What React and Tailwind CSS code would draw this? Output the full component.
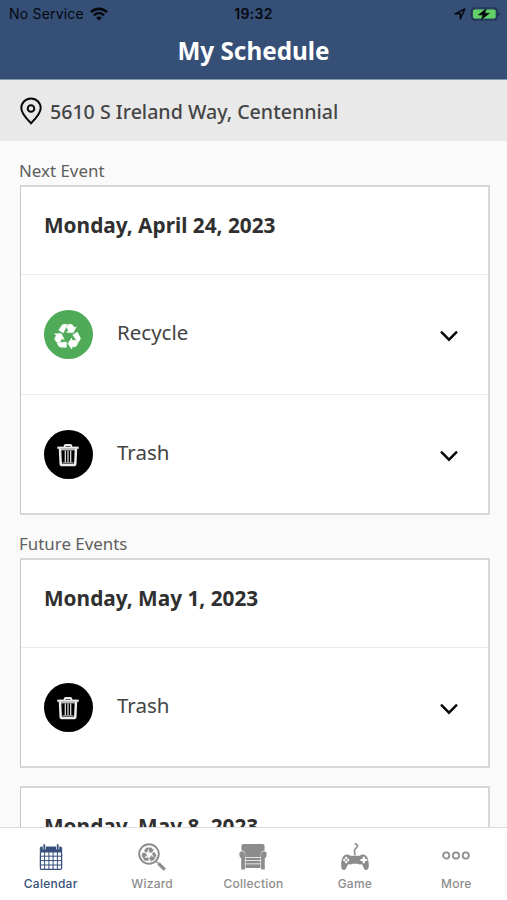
function Wifi() {
  return (
    <svg className="ml-[6px] h-[14px] w-[18px]" viewBox="0 0 18 14" fill="none" stroke="#05080d">
      <path d="M1 5.2C5.5.7 12.5.7 17 5.2" strokeWidth="2.6" />
      <path d="M3.9 8.3c3-2.8 7.2-2.8 10.2 0" strokeWidth="2.4" />
      <path d="M9 13.5L6.2 10.7c1.5-1.5 4.1-1.5 5.6 0z" fill="#05080d" stroke="none" />
    </svg>
  );
}

function Battery() {
  return (
    <svg className="h-[14px] w-[30px]" viewBox="0 0 30 14" fill="none">
      <rect x="0.6" y="1" width="25.4" height="12" rx="3.4" stroke="#1d3049" strokeWidth="1.2" />
      <rect x="2" y="2.5" width="22.6" height="9" rx="1.8" fill="#62d166" />
      <path d="M27.2 5v4c1.3-.5 1.6-1.2 1.6-2s-.3-1.5-1.6-2z" fill="#1d3049" />
      <path d="M15.2 1.8L7.4 7.9h4.5l-1.5 4.7 8-6.3h-4.6z" fill="#05080d" stroke="#05080d" strokeWidth=".6" />
    </svg>
  );
}

// One third of the recycling loop is drawn around the origin and turned three times.
function RecycleLoop() {
  return [0, 120, 240].map((angle) => (
    <g key={angle} transform={`rotate(${angle})`} fill="currentColor" stroke="currentColor" strokeWidth=".7" strokeLinejoin="round">
      <path d="M-8.6-6.4L-5.4-11.4Q-4.9-12.2-4-12.2H-.4L-1-10.4-4.2-3.8z" />
      <path d="M.8-12.2H3.6q1 0 1.5.8L6.7-8.8 8.7-9.8 5.7-4-.9-4.4 1.2-5.6-.8-9.4z" />
    </g>
  ));
}

function RecycleIcon() {
  return (
    <svg className="h-[28px] w-[28px] text-white" viewBox="-14 -14 28 28">
      <g transform="translate(-.5 1.6)"><RecycleLoop /></g>
    </svg>
  );
}

function Trash() {
  return (
    <svg className="h-[24px] w-[22px]" viewBox="0 0 22 24" fill="none" stroke="#ececec">
      <path d="M0.3 4.7h21.4" strokeWidth="2.2" />
      <path d="M7.6 4.5V3.3Q7.6 2 9 2h4q1.4 0 1.4 1.3v1.2" strokeWidth="1.9" />
      <path d="M3 5.5l.7 15.1q.1 1.5 1.6 1.5h11.4q1.5 0 1.6-1.5L19 5.5" strokeWidth="2.5" />
      <path d="M4 6.6h14" stroke="#bcbcbc" strokeWidth="1.6" />
      <path d="M8.3 7.5v12M11 7.5v12M13.7 7.5v12" strokeWidth="1.2" />
      <path d="M5.5 19.8h11" stroke="#a8a8a8" strokeWidth="1.2" />
    </svg>
  );
}

function Row({ kind, last }) {
  const recycle = kind === "Recycle";
  return (
    <div className={`flex items-center border-t border-[#ebebeb] pl-[22.5px] pr-[30px] ${last ? "h-[119px] pt-[1px]" : "h-[120px]"}`}>
      <div className={`flex h-[49px] w-[49px] shrink-0 items-center justify-center rounded-full ${recycle ? "bg-[#4fab58]" : "bg-black"}`}>
        {recycle ? <RecycleIcon /> : <Trash />}
      </div>
      <span className="ml-[24.5px] grow pb-[6px] text-[20.5px] leading-[28px] text-[#444]">{kind}</span>
      <svg className="mt-[3px] h-[12px] w-[18px]" viewBox="0 0 18 12" fill="none" stroke="#050505" strokeWidth="2.4">
        <path d="M1 1.7l8 8 8-8" />
      </svg>
    </div>
  );
}

function Card({ date, items }) {
  return (
    <section className="mr-[17px] ml-[20px] shrink-0 border-2 border-l border-[#d8d8d8] border-l-[#c6c6c6] bg-white">
      <h2 className="flex h-[87px] items-center pb-[12px] pl-[23px] text-[20.8px] leading-[30px] font-bold text-[#303030]">{date}</h2>
      {items.map((kind, i) => <Row key={kind} kind={kind} last={i === items.length - 1} />)}
    </section>
  );
}

function CalendarIcon() {
  return (
    <svg className="h-[28px] w-[26px]" viewBox="0 0 26 28" fill="none" stroke="currentColor">
      <path d="M2.3 5.2Q2.3 4 3.5 4h19q1.2 0 1.2 1.2v3.6H2.3z" fill="currentColor" strokeWidth="1" />
      <path d="M6.3 1.3v5M19.7 1.3v5" stroke="white" strokeWidth="3.2" />
      <path d="M6.3 1.3v5M19.7 1.3v5" strokeWidth="1.8" />
      <rect x="2.4" y="8.6" width="21.2" height="17.8" rx="1.5" strokeWidth="1.3" />
      <path d="M6.6 9v17M10.9 9v17M15.1 9v17M19.4 9v17M2.5 13.2h21M2.5 17.6h21M2.5 22h21" strokeWidth="1" />
    </svg>
  );
}

function WizardIcon() {
  return (
    <svg className="h-[28px] w-[28px]" viewBox="0 0 28 28" fill="none" stroke="currentColor">
      <circle cx="11" cy="11" r="9.8" strokeWidth="1.9" />
      <g transform="translate(11 11.6) scale(.56)"><RecycleLoop /></g>
      <path d="M18.2 18.2l2.4 2.4" strokeWidth="1.3" />
      <path d="M20.5 20.5l6.3 6.1" strokeWidth="3.2" />
    </svg>
  );
}

function ChairIcon() {
  return (
    <svg className="h-[28px] w-[28px]" viewBox="0 0 28 28" fill="currentColor">
      <path d="M2.4 7.3V3Q2.4 1 4.4 1h19.2q2 0 2 2v4.3q-3.8.5-3.8 4.6v2.4H6.2v-2.4q0-4.1-3.8-4.6z" />
      <path d="M6.5 15h15v2.3h-15zM6.5 18h15v2.5h-15zM6.5 21.3h15v3.8h-15z" />
      <path d="M.3 11.5C.3 9.3 1.3 8.2 3 8.2s2.9 1.3 2.9 3.3v15H2.2V15.3Q.3 14 .3 11.5zM27.7 11.5c0-2.2-1-3.3-2.7-3.3s-2.9 1.3-2.9 3.3v15h3.7V15.3q1.9-1.3 1.9-3.8z" />
    </svg>
  );
}

function GameIcon() {
  return (
    <svg className="h-[28px] w-[28px]" viewBox="0 0 28 28" fill="none">
      <path d="M13.7.5c2.8 1 3.7 2.6 1.6 4.3-2.4 1.7-2.2 3.2-1.1 7.5" stroke="currentColor" strokeWidth="1.6" />
      <path d="M5.2 11.5q2.2-.4 4 1.2h9.6q1.8-1.6 4-1.2c3.8.7 5.1 6.5 5 11.3-.1 5-3.6 5.2-4.8 2.7L20.8 21q-2.6 1.2-4-.2h-5.6q-1.4 1.4-4 .2L5 25.5C3.8 28 .3 27.8.2 22.8c-.1-4.8 1.2-10.6 5-11.3z" fill="currentColor" />
      <path d="M5.2 13.4l1.6 1.7-1.6 1.3-1.6-1.3zM5.2 17.6l1.6 1.3-1.6 1.7-1.6-1.7zM1.8 17l1.5-1.5L4.6 17l-1.3 1.5zM5.8 17l1.3-1.5L8.6 17l-1.5 1.5z" fill="white" />
      <path d="M22.8 13.7v6.6M19.5 17h6.6" stroke="white" strokeWidth="2.2" />
    </svg>
  );
}

function MoreIcon() {
  return (
    <svg className="h-[28px] w-[28px]" viewBox="0 0 28 28" fill="none" stroke="currentColor" strokeWidth="1.7">
      <circle cx="4.2" cy="12.5" r="3.1" />
      <circle cx="14" cy="12.5" r="3.1" />
      <circle cx="23.8" cy="12.5" r="3.1" />
    </svg>
  );
}

const tabs = [
  ["Calendar", CalendarIcon],
  ["Wizard", WizardIcon],
  ["Collection", ChairIcon],
  ["Game", GameIcon],
  ["More", MoreIcon],
];

export default function App() {
  return (
    <div className="flex h-[900px] w-[507px] flex-col overflow-hidden bg-[#fafafa] font-['Noto_Sans',sans-serif]">
      <header className="h-[80px] shrink-0 border-b border-[#8298b1] bg-[#364f77]">
        <div className="grid h-[27px] grid-cols-3 items-center px-[6px] font-['Inter',sans-serif] text-[#05080d]">
          <div className="flex items-center pl-[3px] text-[14px] tracking-[0.2px]">No Service<Wifi /></div>
          <div className="text-center text-[14px] font-semibold tracking-[0.3px]">19:32</div>
          <div className="flex items-center justify-end gap-[5px]">
            <svg className="h-[12px] w-[12px]" viewBox="0 0 12 12" fill="none" stroke="#05080d" strokeWidth="1.5" strokeLinejoin="round">
              <path d="M1 5.8L10.8 1 6.3 11V5.8z" />
            </svg>
            <Battery />
          </div>
        </div>
        <h1 className="text-center text-[24.3px] leading-[47px] font-bold text-white">My Schedule</h1>
      </header>
      <div className="flex h-[61px] shrink-0 items-center bg-[#e9e9e9] pl-[20px]">
        <svg className="h-[28px] w-[22px]" viewBox="0 0 22 28" fill="none" stroke="#080808" strokeWidth="2">
          <path d="M11 26.3C7 22.4 1.3 16.7 1.3 11.1a9.7 9.7 0 0 1 19.4 0C20.7 16.7 15 22.4 11 26.3z" />
          <circle cx="11" cy="11.5" r="3.3" />
        </svg>
        <span className="ml-[8px] pt-[3px] text-[19.6px] leading-[28px] font-medium text-[#454545]">5610 S Ireland Way, Centennial</span>
      </div>
      <main className="flex min-h-0 grow flex-col overflow-hidden">
        <h3 className="h-[44px] shrink-0 pt-[18px] pl-[19px] text-[16.9px] leading-[24px] text-[#606060]">Next Event</h3>
        <Card date="Monday, April 24, 2023" items={["Recycle", "Trash"]} />
        <h3 className="h-[43px] shrink-0 pt-[17px] pl-[19px] text-[16.9px] leading-[24px] text-[#606060]">Future Events</h3>
        <Card date="Monday, May 1, 2023" items={["Trash"]} />
        <div className="h-[18px] shrink-0" />
        <Card date="Monday, May 8, 2023" items={[]} />
      </main>
      <nav className="grid h-[73px] shrink-0 grid-cols-5 border-t border-[#dedede] bg-white font-['Inter',sans-serif]">
        {tabs.map(([label, Icon], i) => (
          <div key={label} className={`flex flex-col items-center pt-[15px] ${i === 0 ? "text-[#36507b]" : "text-[#8c8c8c]"}`}>
            <Icon />
            <span className="mt-[4px] text-[12px] leading-[18px] font-medium tracking-[0.25px]">{label}</span>
          </div>
        ))}
      </nav>
    </div>
  );
}
